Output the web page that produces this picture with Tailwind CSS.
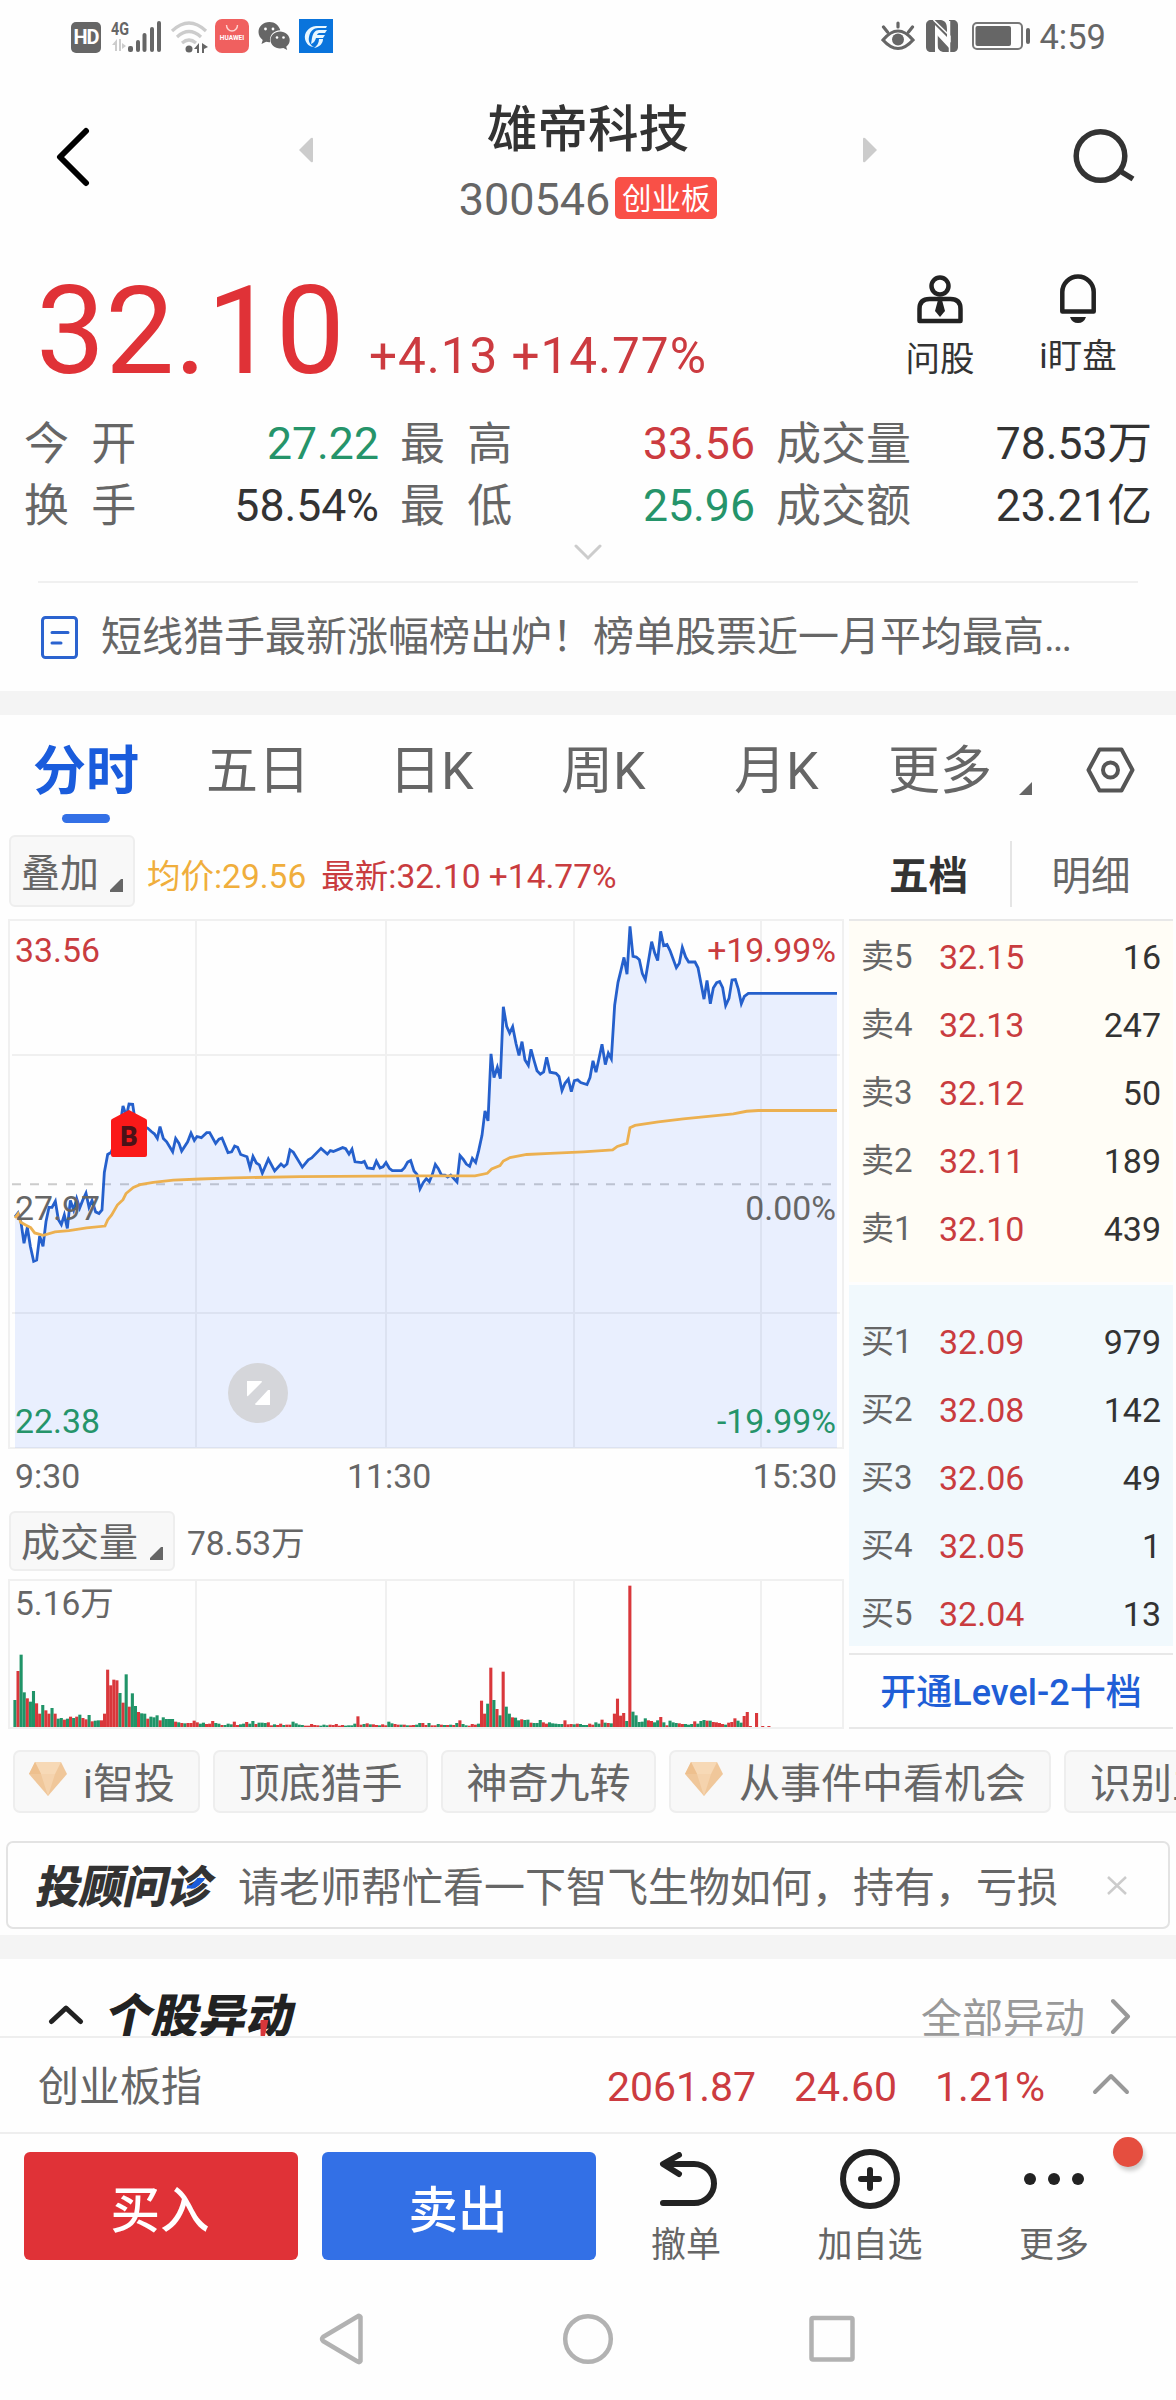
<!DOCTYPE html>
<html lang="zh-CN">
<head>
    <meta charset="UTF-8">
    <meta name="viewport" content="width=device-width, initial-scale=1.0">
    <title>雄帝科技 300546</title>
    <script src="https://cdn.jsdelivr.net/npm/@tailwindcss/browser@4"></script>
</head>
<body class="bg-white">

<div class="w-[1176px] h-[2400px] overflow-hidden bg-[#fefefe] text-[#666] font-['Roboto','Noto_Sans_CJK_SC',sans-serif]">

    <!-- Status bar -->
    <div class="h-[72px] flex items-center pl-[71px] pr-[70px]">
        <div class="w-[30px] h-[31px] mt-[2px] rounded-[5px] bg-[#666] text-white text-[20px] leading-[31px] font-bold text-center tracking-tighter">HD</div>
        <svg class="ml-[10px] w-[51px] h-[34px] mt-[1px] overflow-visible" viewBox="0 0 51 34" fill="#666">
            <text x="0" y="15" font-size="18" font-weight="700" textLength="18" lengthAdjust="spacingAndGlyphs">4G</text>
            <path d="M1 25l5-6v12H4v-6zM8 19h2v12H8zM11 23l4 3-4 3z" fill="#ccc"/>
            <rect x="17" y="26" width="5" height="6" rx="2"/><rect x="25" y="20" width="4" height="12" rx="2"/><rect x="31.500" y="13" width="4" height="19" rx="2"/><rect x="39" y="7" width="4" height="25" rx="2"/><rect x="46" y="1" width="4" height="31" rx="2"/>
        </svg>
        <svg class="ml-[8px] w-[39px] h-[34px] mt-[1px]" viewBox="0 0 39 34" fill="none">
            <path d="M2 11Q19-5 36 11M7 17Q19 6 31 17M12 23Q19 17 26 23" stroke="#ccc" stroke-width="3.200"/>
            <circle cx="19" cy="29" r="3.500" fill="#666"/>
            <path d="M24 29l5-6v10h-2v-4zM32 23l6 4-4 2v4h-2z" fill="#666"/>
        </svg>
        <div class="ml-[6px] w-[34px] h-[34px] rounded-[7px] bg-[#f0605f] flex flex-col items-center text-white">
            <svg class="w-[14px] h-[8px] mt-[6px]" viewBox="0 0 14 8" fill="none" stroke="#ffd5d2" stroke-width="1.400"><path d="M1.500 0a5.500 6 0 0 0 11 0"/></svg>
            <span class="text-[6.500px] leading-[10px] font-bold">HUAWEI</span>
        </div>
        <svg class="ml-[9px] w-[33px] h-[28px]" viewBox="0 0 33 28" fill="#666">
            <path d="M11.500 0C5 0 .5 4.500.5 10c0 3.300 1.600 6 4.200 8L3.500 22l4.600-2.200c1.600.5 3 .5 4 .4C11 13 16 8.500 22.300 8.300 21 3.500 16.800 0 11.500 0z"/>
            <path d="M22 9.500c-5.200 0-9.500 3.700-9.500 8.500s4.300 8.500 9.500 8.500c1.200 0 2.300-.2 3.400-.5l3.800 2-1-3.300c2.300-1.600 3.500-4 3.500-6.700 0-4.800-4.400-8.500-9.700-8.500z"/>
            <circle cx="7.500" cy="7" r="1.400" fill="#fff"/><circle cx="15" cy="7" r="1.400" fill="#fff"/><circle cx="19" cy="15.500" r="1.300" fill="#fff"/><circle cx="25.500" cy="15.500" r="1.300" fill="#fff"/>
        </svg>
        <svg class="ml-[8px] w-[34px] h-[34px]" viewBox="0 0 34 34">
            <rect width="34" height="34" fill="#0a74dc"/>
            <path d="M28 7H17C9 8 5 14 6 20c1 5 5 8 9 8C11 26 9 22 10 18 11 12 15 9 19 9h8z" fill="#e9f7ff"/>
            <path d="M28 11h-8c-4 0-6 3-7 8l-1 6c3-1 4-3 5-6h7l2-3h-8c.6-1.500 1.500-2 3-2h5zM24 20h-4c0 4-2 7-5 9 6-1 9-5 9-9z" fill="#e9f7ff"/>
        </svg>

        <svg class="ml-auto w-[34px] h-[30px]" viewBox="0 0 34 30" fill="none" stroke="#666" stroke-width="3.200" stroke-linecap="round">
            <path d="M2 19Q17 1 32 19Q17 36 2 19zM17 6V2M6.500 11L2.500 6M27.500 11l4-5"/>
            <circle cx="17" cy="18.500" r="6" fill="#666" stroke="none"/>
        </svg>
        <svg class="ml-[11px] w-[32px] h-[32px]" viewBox="0 0 32 32" fill="#666">
            <path d="M5 0h4v32H5c-3 0-5-2-5-5V5c0-3 2-5 5-5zM23 0h4c3 0 5 2 5 5v22c0 3-2 5-5 5h-4z"/>
            <path d="M8 0h7c5 1 6 4 6 10v7L8 4zM24 32h-7c-4-1-6-4-6-9v-8l13 14z"/>
            <path d="M7.500 0L24 16v5L11 10v20M23.500 32V1" fill="none" stroke="#fff" stroke-width="1.500"/>
        </svg>
        <svg class="ml-[14px] w-[60px] h-[28px]" viewBox="0 0 60 28" fill="none" stroke="#777">
            <rect x="1" y="1" width="49" height="26" rx="4" stroke-width="2"/>
            <rect x="3.500" y="4" width="35.500" height="20" rx="2" fill="#666" stroke="none"/>
            <rect x="54" y="6" width="4" height="16" rx="2" fill="#666" stroke="none"/>
        </svg>
        <span class="ml-[7px] mt-[2px] text-[34.500px] leading-[40px]">4:59</span>
    </div>

    <!-- Header -->
    <div class="h-[168px] flex items-start pl-[54px] pr-[41px]">
        <svg class="mt-[55px] w-[38px] h-[60px] shrink-0" viewBox="0 0 38 60" fill="none" stroke="#000" stroke-width="6" stroke-linecap="round" stroke-linejoin="round"><path d="M32 4L6 30l26 26"/></svg>
        <svg class="mt-[65px] ml-[207px] w-[14px] h-[26px] shrink-0" viewBox="0 0 14 26" fill="#ccc"><path d="M0 13L12 1q2-1 2 1v22q0 2-2 1z"/></svg>
        <div class="w-[550px] flex flex-col items-center pt-[28px]">
            <h1 class="text-[50.500px] leading-[60px] font-medium text-[#333]">雄帝科技</h1>
            <div class="mt-[17px] h-[42px] flex items-center">
                <span class="text-[45px] leading-[42px] pt-[4px]">300546</span>
                <span class="ml-[5px] w-[102px] h-[42px] rounded-[5px] bg-[#f95047] text-white text-[29.500px] leading-[44px] text-center">创业板</span>
            </div>
        </div>
        <svg class="mt-[65px] w-[14px] h-[26px] shrink-0" viewBox="0 0 14 26" fill="#ccc"><path d="M14 13L2 1Q0 0 0 2v22q0 2 2 1z"/></svg>
        <svg class="mt-[56px] ml-auto w-[62px] h-[56px] shrink-0" viewBox="0 0 62 56" fill="none" stroke="#333" stroke-width="5.500"><circle cx="27.500" cy="28" r="24.300"/><path d="M47 43l13 8"/></svg>
    </div>

    <!-- Price -->
    <div class="h-[160px] flex items-start pl-[36px]">
        <div class="flex items-baseline pt-[29px]">
            <span class="text-[123px] leading-[124px] text-[#e03237]">32.10</span>
            <span class="ml-[24px] text-[49.500px] leading-[60px] tracking-[0.950px] text-[#cc3b40]">+4.13 +14.77%</span>
        </div>
        <div class="ml-auto mt-[34px] w-[100px] flex flex-col items-center text-[#333] text-[34.500px]">
            <svg class="w-[46px] h-[50px]" viewBox="0 0 46 50" fill="none" stroke="#222" stroke-width="4.500">
                <circle cx="23" cy="12" r="8.500"/>
                <path d="M2.500 47V35q0-10 10-10h21q10 0 10 10v12z" stroke-linejoin="round"/>
                <path d="M21 26h4l3 11-5 6-5-6z" fill="#222" stroke="none"/>
            </svg>
            <span class="mt-[15px] leading-[40px]">问股</span>
        </div>
        <div class="ml-[38px] mr-[48px] mt-[34px] w-[100px] flex flex-col items-center text-[#333] text-[34.500px]">
            <svg class="w-[36px] h-[50px]" viewBox="0 0 36 50">
                <path d="M2.300 37.500V18a15.700 15.500 0 0 1 31.400 0v19.500z" fill="none" stroke="#222" stroke-width="4.500" stroke-linejoin="round"/>
                <path d="M10 43h16q-2 6-8 6t-8-6z" fill="#222"/>
            </svg>
            <span class="mt-[12px] leading-[40px] whitespace-nowrap">i盯盘</span>
        </div>
    </div>

    <!-- Key figures -->
    <div class="h-[137px] pt-[14px] pl-[24px] pr-[24px] grid grid-cols-[355px_355px_376px] gap-x-[21px] text-[45px] leading-[61px]">
        <div class="flex justify-between"><span class="whitespace-pre">今  开</span><span class="text-[44.600px] text-[#25946a]">27.22</span></div>
        <div class="flex justify-between"><span class="whitespace-pre">最  高</span><span class="text-[44.600px] text-[#cc3b40]">33.56</span></div>
        <div class="flex justify-between"><span>成交量</span><span class="text-[44.500px] text-[#333]">78.53万</span></div>
        <div class="flex justify-between"><span class="whitespace-pre">换  手</span><span class="text-[44.600px] text-[#333]">58.54%</span></div>
        <div class="flex justify-between"><span class="whitespace-pre">最  低</span><span class="text-[44.600px] text-[#25946a]">25.96</span></div>
        <div class="flex justify-between"><span>成交额</span><span class="text-[44.500px] text-[#333]">23.21亿</span></div>
    </div>
    <div class="h-[44px] flex justify-center pt-[7px]">
        <svg class="w-[28px] h-[17px]" viewBox="0 0 28 17" fill="none" stroke="#ccc" stroke-width="3" stroke-linecap="round"><path d="M2 2l12 12L26 2"/></svg>
    </div>
    <div class="mx-[38px] h-[2px] bg-[#f0f0f0]"></div>

    <!-- News line -->
    <div class="h-[108px] flex items-center pl-[41px]">
        <svg class="w-[37px] h-[43px]" viewBox="0 0 37 43" fill="none" stroke="#2b63cf" stroke-width="3" stroke-linecap="round"><rect x="1.500" y="1.500" width="34" height="40" rx="3"/><path d="M11 16.500h16M11 27h9"/></svg>
        <span class="ml-[23px] text-[41px] leading-[50px] whitespace-nowrap">短线猎手最新涨幅榜出炉！榜单股票近一月平均最高<span class="tracking-[-2px]">...</span></span>
    </div>
    <div class="h-[24px] bg-[#f4f4f4]"></div>

    <!-- Period tabs -->
    <div class="h-[120px] flex pl-[33px] pt-[27px] text-[52px] leading-[60px]">
        <div class="w-[173px]">
            <span class="block h-[60px] text-[53px] font-bold text-[#1a5cdc]">分时</span>
            <div class="ml-[29px] mt-[12px] w-[48px] h-[9px] rounded-full bg-[#3370e6]"></div>
        </div>
        <div class="w-[183px]">五日</div>
        <div class="w-[172px]">日K</div>
        <div class="w-[173px]">周K</div>
        <div class="w-[154px]">月K</div>
        <div class="flex">更多
            <svg class="ml-[27px] mt-[40px] w-[14px] h-[13px]" viewBox="0 0 14 13" fill="#666"><path d="M13 0v13H0z"/></svg>
        </div>
        <svg class="ml-[53px] mt-[5px] w-[49px] h-[46px]" viewBox="0 0 49 46" fill="none" stroke="#555" stroke-width="4" stroke-linejoin="round"><path d="M13.500 2.500h22L46.500 23l-11 20.500h-22L2.500 23z"/><circle cx="24.500" cy="23" r="7.500"/></svg>
    </div>

    <div class="h-[894px] flex">
        <div class="w-[849px] pl-[8px] text-[33.800px]">
            <!-- Price chart -->
            <div class="h-[84px] flex items-start leading-[40px]">
                <div class="ml-[1px] w-[126px] h-[72px] rounded-[6px] border-2 border-[#eee] bg-[#f8f8f8] flex pl-[10px] pt-[7px] text-[39px] leading-[60px]">叠加
                    <svg class="ml-[11px] mt-[35px] w-[13px] h-[13px]" viewBox="0 0 13 13" fill="#666"><path d="M11 0h2v13H0v-2z"/></svg>
                </div>
                <span class="ml-[12px] mt-[22px] text-[33.500px] text-[#f0ae3c]">均价:29.56</span>
                <span class="ml-[15px] mt-[22px] text-[33.500px] text-[#c93c3f]">最新:32.10 +14.77%</span>
            </div>
            <div class="relative w-[836px] h-[530px]">
                <svg class="block w-[836px] h-[530px]" viewBox="24 49.600 2508 1385" preserveAspectRatio="none" fill="none">
                    <g stroke="#f0f0f0" stroke-width="2">
                        <path vector-effect="non-scaling-stroke" d="M27 52.200H2529V1432H27zM588 52V1432M1158 52V1432M1722 52V1432M2283 52V1432M36 405H2520M36 1079H2520"/>
                    </g>
                    <path vector-effect="non-scaling-stroke" d="M36 742.500H2511" stroke="#ccc" stroke-width="2" stroke-dasharray="9 9"/>
                    <polygon id="priceArea" fill="#3370ff" fill-opacity="0.100"/>
                    <polyline id="priceLine" stroke="#2560cc" stroke-width="2.800" vector-effect="non-scaling-stroke"/>
                    <polyline stroke="#ecb050" stroke-width="2.800" vector-effect="non-scaling-stroke" points="45,831 54,820 62,842 78,850 92,856 104,870 130,876 165,867 207,864 260,857 315,852 323,836 335,823 352,797 369,783 378,767 400,751 420,744 460,738 520,732 600,729 700,726 900,723 1240,721 1425,721 1462,714 1475,703 1500,694 1510,682 1530,673 1580,665 1650,662 1750,658 1838,653 1852,644 1881,636 1890,595 1905,589 1975,580 2050,572 2200,559 2240,552 2275,550 2511,550"/>
                </svg>
                <div class="absolute left-[7px] top-[12px] leading-[40px] text-[#c93c3f]">33.56</div>
                <div class="absolute left-[7px] top-[270px] leading-[40px]">27.97</div>
                <div class="absolute left-[7px] top-[483px] leading-[40px] text-[#25946a]">22.38</div>
                <div class="absolute right-[8px] top-[12px] leading-[40px] text-[#c93c3f]">+19.99%</div>
                <div class="absolute right-[8px] top-[270px] leading-[40px]">0.00%</div>
                <div class="absolute right-[8px] top-[483px] leading-[40px] text-[#25946a]">-19.99%</div>
                <!-- Buy marker -->
                <div class="absolute left-[103px] top-[191px] w-[36px] h-[48px]">
                    <svg class="absolute w-[36px] h-[48px]" viewBox="0 0 36 48" fill="#fa1919"><path d="M18 0l17 9q1 .5 1 2v34q0 2-2 2H2q-2 0-2-2V11q0-1.500 1-2z"/></svg>
                    <span class="absolute left-0 top-[10px] w-[36px] text-center text-[27px] leading-[34px] font-black text-[#4a1218]">B</span>
                </div>
                <!-- Fullscreen toggle -->
                <svg class="absolute left-[220px] top-[444px] w-[60px] h-[60px]" viewBox="0 0 60 60"><circle cx="30" cy="30" r="30" fill="#d5d6da"/><path d="M19 18h14q2 0 0 2L20 33q-1 1-1-1zM42 27v15H28q-2-1 0-2l12-13z" fill="#fff"/></svg>
            </div>
            <div class="h-[62px] w-[829px] pl-[7px] pt-[8px] grid grid-cols-[332px_auto_1fr] leading-[40px]"><span>9:30</span><span>11:30</span><span class="text-right">15:30</span></div>

            <!-- Volume chart -->
            <div class="h-[68px] flex items-start">
                <div class="ml-[1px] w-[166px] h-[60px] rounded-[6px] border-2 border-[#eee] bg-[#f8f8f8] flex pl-[10px] text-[39px] leading-[61px]">成交量
                    <svg class="ml-[12px] mt-[34px] w-[13px] h-[13px]" viewBox="0 0 13 13" fill="#666"><path d="M11 0h2v13H0v-2z"/></svg>
                </div>
                <span class="ml-[12px] text-[33.500px] leading-[65px]">78.53万</span>
            </div>
            <div class="relative w-[836px] h-[150px]">
                <svg class="block w-[836px] h-[150px]" viewBox="0 0 836 150">
                    <path d="M1 1H835V149H1zM188 1V149M378 1V149M566 1V149M753 1V149" fill="none" stroke="#f0f0f0" stroke-width="2"/>
                    <g id="volumeBars"></g>
                </svg>
                <div class="absolute left-[7px] top-[5px] text-[33.500px] leading-[40px]">5.16万</div>
            </div>
        </div>

        <!-- Order book -->
        <div class="w-[324px] text-[34px]">
            <div class="h-[84px] flex pt-[6px] pb-[12px] text-[39.500px] leading-[72px] text-center">
                <div class="w-[161px] pr-[2px] font-bold text-[#333]">五档</div>
                <div class="w-[2px] h-[66px] bg-[#e5e5e5]"></div>
                <div class="w-[158px]">明细</div>
            </div>
            <div id="asks" class="h-[363px] border-t-2 border-[#e8e8e8] bg-[#fffdf6] pt-[2px] pl-[12px] pr-[12px]"></div>
            <div id="bids" class="mt-[3px] h-[361px] bg-[#f1f9fd] pt-[23px] pl-[12px] pr-[12px]"></div>
            <div class="mt-[7px] h-[76px] border-y-2 border-[#e8e8e8] text-center text-[36px] leading-[77px] font-medium text-[#1f5ed6]">开通Level-2十档</div>
        </div>
    </div>

    <!-- Tool chips -->
    <div class="h-[112px] w-[1176px] pt-[21px] pl-[13px] flex gap-[13px] text-[41px] leading-[64px] overflow-hidden whitespace-nowrap">
        <div class="shrink-0 w-[187px] h-[63px] rounded-[7px] border-2 border-[#eee] bg-[#f8f8f8] flex pl-[14px]">
            <svg class="mt-[10px] mr-[16px] w-[38px] h-[34px]" viewBox="0 0 38 34"><path d="M6 0h26l6 12-19 22L0 12z" fill="#f0c79a"/><path d="M6 0h26l-6 12H12z" fill="#f7d9b6"/><path d="M12 12h14l-7 22z" fill="#f5d3ad"/><path d="M0 12L6 0l6 12z" fill="#eec08e"/></svg>
            i智投
        </div>
        <div class="shrink-0 w-[215px] h-[63px] rounded-[7px] border-2 border-[#eee] bg-[#f8f8f8] text-center">顶底猎手</div>
        <div class="shrink-0 w-[215px] h-[63px] rounded-[7px] border-2 border-[#eee] bg-[#f8f8f8] text-center">神奇九转</div>
        <div class="shrink-0 w-[382px] h-[63px] rounded-[7px] border-2 border-[#eee] bg-[#f8f8f8] flex pl-[14px]">
            <svg class="mt-[10px] mr-[16px] w-[38px] h-[34px]" viewBox="0 0 38 34"><path d="M6 0h26l6 12-19 22L0 12z" fill="#f0c79a"/><path d="M6 0h26l-6 12H12z" fill="#f7d9b6"/><path d="M12 12h14l-7 22z" fill="#f5d3ad"/><path d="M0 12L6 0l6 12z" fill="#eec08e"/></svg>
            从事件中看机会
        </div>
        <div class="shrink-0 w-[214px] h-[63px] rounded-[7px] border-2 border-[#eee] bg-[#f8f8f8] pl-[24px]">识别主力</div>
    </div>

    <!-- Advisor banner -->
    <div class="mx-[6px] h-[88px] rounded-[7px] border-2 border-[#e3e3e3] flex items-center pl-[30px] pr-[41px]">
        <div class="relative w-[178px] pt-[5px] text-[44.500px] leading-[56px] font-black text-[#333] -skew-x-12 tracking-[-0.800px] whitespace-nowrap">投顾问诊
            <svg class="absolute left-[148px] top-[23px] w-[20px] h-[12px]" viewBox="0 0 22 15"><path d="M11 0h10l-6 9-5 4H0V9h5z" fill="#1a5cdc"/></svg>
        </div>
        <span class="ml-[22px] pt-[5px] text-[41px] leading-[60px] whitespace-nowrap">请老师帮忙看一下智飞生物如何，持有，亏损</span>
        <svg class="ml-auto w-[20px] h-[19px]" viewBox="0 0 20 19" fill="none" stroke="#ccc" stroke-width="2.500"><path d="M1 1l18 17M19 1L1 18"/></svg>
    </div>
    <div class="mt-[6px] h-[24px] bg-[#f4f4f4]"></div>

    <!-- Unusual moves -->
    <div class="h-[77px] overflow-hidden flex items-start pl-[48px] pr-[44px]">
        <svg class="mt-[45px] w-[36px] h-[21px]" viewBox="0 0 36 21" fill="none" stroke="#222" stroke-width="5" stroke-linecap="round" stroke-linejoin="round"><path d="M3.500 17.500L18 4l14.500 13.500"/></svg>
        <div class="relative ml-[23px] mt-[28px] text-[47px] leading-[60px] font-black text-[#222] -skew-x-12">个股异动
            <svg class="absolute left-[154px] top-[33px] w-[9px] h-[22px]" viewBox="0 0 9 22"><path d="M0 0h8v22H5z" fill="#d8363a"/></svg>
        </div>
        <span class="ml-auto mt-[30px] text-[41px] leading-[60px] text-[#999]">全部异动</span>
        <svg class="ml-[24px] mt-[39px] w-[23px] h-[37px]" viewBox="0 0 23 37" fill="none" stroke="#999" stroke-width="4" stroke-linecap="round" stroke-linejoin="round"><path d="M4 3l15 15.500L4 34"/></svg>
    </div>

    <!-- Index strip -->
    <div class="h-[98px] border-y-2 border-[#eee] flex items-center pl-[38px] pr-[46px] text-[41px] leading-[60px] pt-[4px]">
        <span>创业板指</span>
        <div class="ml-auto flex gap-[38px] text-[#cc3b40]"><span>2061.87</span><span>24.60</span><span>1.21%</span></div>
        <svg class="ml-[47px] mb-[7px] w-[38px] h-[22px]" viewBox="0 0 38 22" fill="none" stroke="#999" stroke-width="4" stroke-linecap="round" stroke-linejoin="round"><path d="M3 19L19 3l16 16"/></svg>
    </div>

    <!-- Trade actions -->
    <div class="relative h-[146px] flex pt-[18px] pl-[24px]">
        <button class="w-[274px] h-[108px] pr-[2px] rounded-[6px] bg-[#e03237] text-white text-[49.500px] leading-[118px] font-medium">买入</button>
        <button class="ml-[24px] w-[274px] h-[108px] pr-[2px] rounded-[6px] bg-[#3370e6] text-white text-[49.500px] leading-[118px] font-medium">卖出</button>
        <div class="ml-[30px] w-[120px] flex flex-col items-center text-[35px] leading-[50px]">
            <svg class="ml-[4px] w-[60px] h-[62px]" viewBox="0 0 60 62" fill="none" stroke="#222" stroke-width="6" stroke-linecap="round" stroke-linejoin="round"><path d="M21 3L5 12l16 10M6 12h30a20 19.500 0 0 1 0 39H5"/></svg>
            <span class="mt-[7px]">撤单</span>
        </div>
        <div class="ml-[64px] w-[120px] flex flex-col items-center text-[35px] leading-[50px]">
            <svg class="-mt-[3px] w-[60px] h-[60px]" viewBox="0 0 60 60" fill="none" stroke="#222" stroke-width="6" stroke-linecap="round"><circle cx="30" cy="30" r="27"/><path d="M30 21v18M21 30h18"/></svg>
            <span class="mt-[12px]">加自选</span>
        </div>
        <div class="ml-[64px] w-[120px] flex flex-col items-center text-[35px] leading-[50px]">
            <svg class="w-[62px] h-[54px]" viewBox="0 0 62 54" fill="#222"><circle cx="7" cy="27" r="6"/><circle cx="31" cy="27" r="6"/><circle cx="55" cy="27" r="6"/></svg>
            <span class="mt-[15px]">更多</span>
        </div>
        <div class="absolute left-[1113px] top-[3px] w-[30px] h-[30px] rounded-full bg-[#e54e3f] shadow-[2px_4px_4px_rgba(0,0,0,0.2)]"></div>
    </div>

    <!-- System navigation -->
    <div class="h-[120px] pt-[33px] pl-[319px] flex">
        <svg class="w-[45px] h-[52px]" viewBox="0 0 45 52" fill="none" stroke="#b2b2b2" stroke-width="4.500" stroke-linejoin="round"><path d="M41.500 4v44q-1 2-3 .5L4 28q-2-2 0-4L38.500 3.500q2-1.500 3 .5z"/></svg>
        <svg class="ml-[198px] w-[52px] h-[52px]" viewBox="0 0 52 52" fill="none" stroke="#b2b2b2" stroke-width="4.500"><circle cx="26" cy="26" r="22.800"/></svg>
        <svg class="ml-[194px] mt-[2px] w-[48px] h-[48px]" viewBox="0 0 48 48" fill="none" stroke="#b2b2b2" stroke-width="4.500"><rect x="3.500" y="3" width="41" height="41.500" rx="1.500"/></svg>
    </div>
</div>

<script>
    const prices = "45,828 54,818 63,842 72,897 82,855 91,905 101,944 110,941 119,878 129,905 138,840 147,803 156,803 166,787 175,835 184,848 193,823 202,858 211,785 221,810 230,780 239,805 248,785 258,766 267,803 276,785 287,815 297,819 306,810 313,712 323,665 333,660 342,640 351,600 360,590 369,538 379,565 387,533 398,534 405,575 425,590 443,596 454,605 463,611 472,623 480,592 490,623 500,632 518,658 527,623 537,636 545,656 563,632 573,609 583,628 591,618 604,621 620,608 629,608 647,636 657,625 666,622 684,660 695,658 704,643 713,646 722,665 741,671 750,700 759,670 769,687 778,692 787,714 805,677 824,708 843,690 852,697 861,690 870,653 880,659 907,698 925,679 935,674 963,649 982,664 991,655 1000,657 1028,647 1037,650 1047,664 1056,651 1065,684 1085,686 1093,683 1102,700 1120,702 1129,682 1140,700 1149,697 1158,686 1168,701 1177,707 1205,707 1213,700 1223,685 1232,681 1242,708 1251,717 1260,755 1270,738 1279,728 1288,736 1297,717 1306,691 1315,702 1324,718 1335,719 1343,724 1352,719 1371,737 1380,668 1390,678 1399,690 1409,696 1417,675 1427,686 1436,655 1446,615 1455,551 1464,577 1473,402 1482,464 1492,437 1501,467 1510,279 1520,330 1529,348 1538,331 1548,375 1557,406 1566,370 1575,418 1585,432 1593,390 1603,422 1611,446 1621,455 1631,449 1640,411 1650,450 1668,453 1677,461 1686,498 1695,479 1705,468 1714,501 1723,472 1733,470 1742,477 1761,482 1770,464 1779,420 1788,450 1797,414 1806,377 1816,430 1825,400 1834,415 1844,275 1854,215 1863,183 1872,150 1881,194 1890,69 1899,147 1909,149 1918,156 1927,192 1936,208 1955,109 1964,138 1973,158 1982,82 1991,119 2001,116 2010,132 2029,177 2038,165 2047,124 2057,149 2066,162 2085,162 2094,177 2103,218 2112,259 2121,210 2131,271 2140,230 2150,216 2159,213 2168,229 2177,276 2187,257 2196,209 2206,208 2215,233 2224,271 2233,252 2245,244 2511,244";
    document.getElementById("priceLine").setAttribute("points", prices);
    document.getElementById("priceArea").setAttribute("points", "45,1432 " + prices + " 2511,1432");

    // One entry per minute: r = up, g = down, number = volume (a third of a pixel each)
    const volumes = ("g81 r168 g217 g104 r86 g76 g108 r71 r40 g66 r50 r40 g57 r40 g25 g27 r22 g25 r31 g27 r31 g37 r27 r23 g36 r17 g19 g20 r20 r40 " +
        "r172 r125 r142 r140 g102 r73 g158 r61 g101 g63 r45 g41 g40 r25 g31 g29 g35 r20 g29 g24 g24 g24 r16 g14 r12 g11 r12 r12 r19 r14 " +
        "g10 g13 r9 r10 r18 g12 g10 r6 g6 g10 g8 r16 r6 g8 g10 r15 g10 g18 r9 g13 g13 g12 r14 r5 g8 r6 r10 g6 r7 r7 " +
        "g16 g11 g7 g6 r4 r4 r9 r6 r5 g4 g7 g5 r7 r6 r9 r4 r6 g4 g5 g5 g10 r32 r7 g9 r11 g8 r8 r6 g5 r8 " +
        "r5 g16 g11 r9 r7 g7 r7 g5 r5 r6 g7 g12 r12 r6 g12 r5 r5 g9 r7 g6 r6 g7 r6 g12 r20 g9 g5 r4 r9 r7 " +
        "g10 r79 r40 g70 r178 g81 r54 g35 r166 g61 g40 r29 g28 g20 r23 g21 g22 r13 g12 g12 g21 r14 r10 g14 g11 g10 g9 g9 r20 r8 " +
        "r9 g8 r10 g9 g6 g6 r10 r7 g14 g10 r22 g13 r12 g11 r40 r85 r34 r42 g18 r424 g46 g35 g15 g16 g26 r20 r18 g14 g20 r30 " +
        "g14 r5 g19 g14 g12 r11 r9 g9 g7 g9 r17 g10 g18 g21 r19 g19 r15 r14 r12 r9 g7 r13 r15 r26 g19 g13 r33 r45 r3 r0 r42 r0 r3 r0 r3").split(" ");
    let bars = "";
    volumes.forEach((v, i) => {
        const h = Number(v.slice(1)) / 3;
        bars += `<rect x="${(5.4 + i * 3.09).toFixed(2)}" y="${(148 - h).toFixed(2)}" width="3.1" height="${h.toFixed(2)}" fill="${v[0] === "r" ? "#d9373b" : "#209468"}"/>`;
    });
    document.getElementById("volumeBars").innerHTML = bars;

    const asks = [["卖5", "32.15", 16], ["卖4", "32.13", 247], ["卖3", "32.12", 50], ["卖2", "32.11", 189], ["卖1", "32.10", 439]];
    const bids = [["买1", "32.09", 979], ["买2", "32.08", 142], ["买3", "32.06", 49], ["买4", "32.05", 1], ["买5", "32.04", 13]];

    function loadBook(id, rows) {
        document.getElementById(id).innerHTML = rows.map(r => `
            <div class="flex h-[68px] leading-[68px]">
                <span class="w-[78px] text-[33px]">${r[0]}</span>
                <span class="text-[#c93c3f]">${r[1]}</span>
                <span class="ml-auto text-[#333]">${r[2]}</span>
            </div>`).join("");
    }
    loadBook("asks", asks);
    loadBook("bids", bids);
</script>

</body>
</html>
